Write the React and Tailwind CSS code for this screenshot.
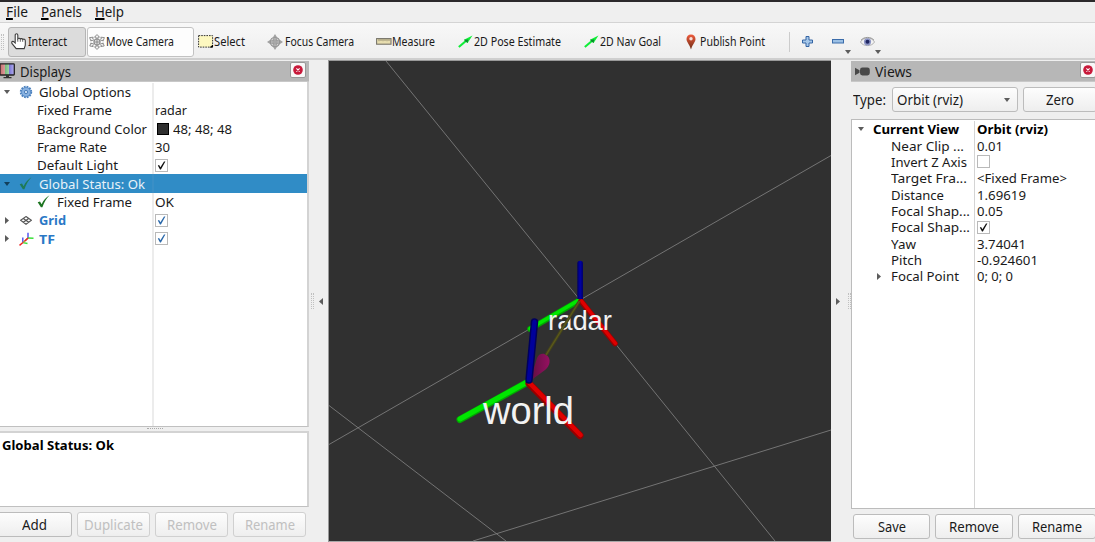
import { useLayoutEffect, useRef } from "react";

/* Text fitted horizontally to a fixed advance width */
function T({ w, className = "", children }) {
  const ref = useRef(null);
  useLayoutEffect(() => {
    const n = ref.current;
    n.style.transform = "none";
    const s = w / n.getBoundingClientRect().width;
    n.style.transform = `scaleX(${s})`;
  }, [w, children]);
  return (
    <span className={"inline-block shrink-0 whitespace-pre " + className} style={{ width: w }}>
      <span ref={ref} className="inline-block origin-left whitespace-pre">{children}</span>
    </span>
  );
}

const Down = ({ className = "", fill = "#5c5c5c" }) => (
  <svg className={"shrink-0 " + className} width="6" height="4" viewBox="0 0 6 4"><path d="M0 0H6L3 4Z" fill={fill} /></svg>
);
const Right = ({ className = "" }) => (
  <svg className={"shrink-0 " + className} width="4" height="7" viewBox="0 0 4 7"><path d="M0 0V7L4 3.5Z" fill="#5c5c5c" /></svg>
);
const Left = ({ className = "" }) => (
  <svg className={"shrink-0 " + className} width="4" height="7" viewBox="0 0 4 7"><path d="M4 0V7L0 3.5Z" fill="#5c5c5c" /></svg>
);

const Hand = () => (
  <svg width="16" height="17" viewBox="0 0 16 17" className="shrink-0">
    <path d="M4.2 10V2C4.200.3 6.800.3 6.800 2V5.800C7.300 5 8.900 5 9.300 6C9.900 5.400 11.200 5.500 11.700 6.400C12.800 5.800 14.300 6.300 14.300 7.800V12.200L13.200 15.600H5.200L.9 10.400C.3 8.600 1.800 7.800 3 8.900Z" fill="#fff" stroke="#3c3c3c" strokeWidth="1.100" />
    <path d="M6.800 6V8.800M9.300 6.300V8.800M11.700 6.700V8.800" stroke="#555" strokeWidth=".9" />
  </svg>
);
const MoveIcon = () => (
  <svg width="16" height="16" viewBox="0 0 16 16" className="shrink-0" fill="#f4f4f4" stroke="#777" strokeWidth=".8">
    <path d="M8 .6L10.5 3H9V5H7V3H5.500ZM8 15.400L10.500 13H9V11H7V13H5.500Z" />
    <path d="M.6 3.600L4.200 3.200L3.600 4.600L5.600 5.800L4.800 7.200L2.800 6L2 7.200ZM15.400 3.600L11.800 3.200L12.400 4.600L10.400 5.800L11.200 7.200L13.200 6L14 7.200ZM.8 12L2 8.800L2.800 10L4.800 8.900L5.600 10.200L3.600 11.400L4.200 12.600ZM15.200 12L14 8.800L13.200 10L11.200 8.900L10.400 10.200L12.400 11.400L11.800 12.600Z" />
    <circle cx="8" cy="8" r="2.900" fill="#e9e9e9" /><path d="M5.500 8H10.500M8 5.500V10.500" />
  </svg>
);
const SelectIcon = () => (
  <svg width="16" height="13" viewBox="0 0 16 13" className="shrink-0">
    <rect x=".6" y=".6" width="14" height="11.500" fill="#fdf8c0" stroke="#333" strokeWidth="1" strokeDasharray="1.600 1" />
    <path d="M15 9.500V12.500H11.500Z" fill="#000" />
  </svg>
);
const FocusIcon = () => (
  <svg width="16" height="16" viewBox="0 0 16 16" className="shrink-0" fill="none" stroke="#8e8e8e">
    <circle cx="8" cy="8" r="4.700" fill="#e2e2e2" strokeWidth="1.200" /><ellipse cx="8" cy="8" rx="2" ry="4.600" strokeWidth=".8" /><ellipse cx="8" cy="8" rx="4.600" ry="2" strokeWidth=".8" />
    <path d="M8 3V13M3 8H13" strokeWidth=".9" /><path d="M8 0L10.200 3.400H5.800ZM8 16L10.200 12.600H5.800ZM0 8L3.400 5.800V10.200ZM16 8L12.600 5.800V10.200Z" fill="#a2a2a2" stroke="none" />
  </svg>
);
const Ruler = () => (
  <svg width="16" height="7" viewBox="0 0 16 7" className="shrink-0">
    <rect x=".6" y=".6" width="14.400" height="5.600" fill="#e8deb0" stroke="#77746a" strokeWidth="1.100" />
    <path d="M3 1V3.200M5 1V3M7 1V3.200M9 1V3M11 1V3.200M13 1V3" stroke="#77705a" strokeWidth=".7" />
  </svg>
);
const Arrow = () => (
  <svg width="15" height="13" viewBox="0 0 15 13" className="shrink-0">
    <path d="M.8 12L8.200 5.800" stroke="#0fee38" strokeWidth="2.100" />
    <path d="M14.500 .5L6 4.800L9.600 8Z" fill="#0fee38" />
    <path d="M6 4.800L10.200 4.600L9.600 8L7.400 6.600Z" fill="#08902a" />
  </svg>
);
const Pin = () => (
  <svg width="10" height="16" viewBox="0 0 10 16" className="shrink-0">
    <defs><linearGradient id="pin" x2="0" y2="1"><stop offset="0" stopColor="#ef5b3d" /><stop offset="1" stopColor="#6b2c14" /></linearGradient></defs>
    <path d="M5 .5C2.300.5.5 2.400.5 5C.5 8.300 3.500 10.200 5 15.500C6.500 10.200 9.500 8.300 9.500 5C9.500 2.400 7.700.5 5 .5Z" fill="url(#pin)" />
    <circle cx="5" cy="4.800" r="1.700" fill="#f6dfda" />
  </svg>
);
const Eye = () => (
  <svg width="15" height="12" viewBox="0 0 15 12" className="shrink-0">
    <path d="M.5 6C3 .8 12 .8 14.500 6C12 10.800 3 10.800 .5 6Z" fill="#f3f3f3" stroke="#aaa" strokeWidth=".9" />
    <circle cx="7.500" cy="5.800" r="3.600" fill="#8c95c5" /><circle cx="7.500" cy="5.800" r="2" fill="#202763" />
    <path d="M1 4.200C4 .5 11 .5 14 4.200" fill="none" stroke="#999" />
  </svg>
);
const Monitor = () => (
  <svg width="15" height="16" viewBox="0 0 15 16" className="shrink-0">
    <defs><linearGradient id="mon"><stop offset="0" stopColor="#c86b6b" /><stop offset=".33" stopColor="#d89a9a" /><stop offset=".34" stopColor="#6fba7a" /><stop offset=".65" stopColor="#a7d4a9" /><stop offset=".66" stopColor="#7c78d8" /><stop offset="1" stopColor="#b5b1ef" /></linearGradient></defs>
    <rect x="0" y=".8" width="14.300" height="11.200" rx=".8" fill="url(#mon)" stroke="#222" strokeWidth="1.300" />
    <path d="M6 12H9V14H6ZM3.500 14H11.500V15.200H3.500Z" fill="#333" />
  </svg>
);
const Gear = () => (
  <svg width="14" height="14" viewBox="0 0 14 14" className="shrink-0">
    <circle cx="7" cy="7" r="5.200" fill="#86afe0" stroke="#4b80bd" strokeWidth="2" strokeDasharray="1.700 1.020" />
    <circle cx="7" cy="7" r="4.400" fill="#8ab3e2" stroke="#5a8cc6" strokeWidth=".7" /><circle cx="7" cy="7" r="1.700" fill="#c6daf0" stroke="#4579b6" strokeWidth=".9" />
  </svg>
);
const GreenCheck = ({ fill = "#1c7420" }) => (
  <svg width="13" height="13" viewBox="0 0 13 13" className="shrink-0"><path d="M.7 7.200L3 6.600L4.600 9.200C6.600 5.200 9 2.300 12.500.3C9.500 3.400 7.100 7.400 5.400 12.300H3.900Z" fill={fill} /></svg>
);
const GridIcon = () => (
  <svg width="12" height="9" viewBox="0 0 12 9" className="shrink-0"><path d="M6 .6L11.400 4.300L6 8.200L.6 4.300ZM3.300 2.500L8.700 6.200M8.700 2.500L3.300 6.200" fill="none" stroke="#555" strokeWidth="1.200" /></svg>
);
const TfIcon = () => (
  <svg width="15" height="14" viewBox="0 0 15 14" className="shrink-0" fill="none" strokeWidth="1.400">
    <path d="M9 6V.8M3.800 10.500V5.500" stroke="#4d4df0" /><path d="M9 6L14.500 6.300M4 10.600L8.500 11.500" stroke="#3ae03a" /><path d="M.5 13.400L4 10.500" stroke="#e22" /><path d="M4 10.500L9 6" stroke="#b88335" /><path d="M9 6L6 9" stroke="#e22" />
  </svg>
);
const CameraIcon = () => (
  <svg width="15" height="9" viewBox="0 0 15 9" className="shrink-0"><path d="M0 .8L4.500 3.300V5.700L0 8.200Z" fill="#484848" /><rect x="5" y=".5" width="9.800" height="8" rx="2.400" fill="#484848" /></svg>
);

const Check = ({ on = true, color = "#111" }) => (
  <span className="flex h-[13px] w-[13px] shrink-0 items-center justify-center border border-[#b9b9b9] bg-white">
    {on && <svg width="9" height="9" viewBox="0 0 9 9"><path d="M.8 4.600L2.100 4L3.400 6.200L7 .5H8.400L3.900 8.600H3Z" fill={color} /></svg>}
  </span>
);

const CloseBtn = () => (
  <span className="flex h-4 w-4 shrink-0 items-center justify-center rounded-xs border border-[#999] bg-[#f8f8f8]">
    <svg width="10" height="10" viewBox="0 0 10 10"><circle cx="5" cy="5" r="4.800" fill="#c8193a" /><path d="M3.400 3.400L6.600 6.600M6.600 3.400L3.400 6.600" stroke="#fff" strokeWidth="1.100" /></svg>
  </span>
);

const Btn = ({ children, tw, className, off }) => (
  <span className={"flex h-[25px] shrink-0 items-center justify-center rounded-[3px] border bg-linear-to-b from-[#fdfdfd] to-[#eeeeee] " + (off ? "border-[#d0d0d0] text-[#c0c0c0] " : "border-[#bcbcbc] text-[#1a1a1a] ") + className}>
    <T w={tw}>{children}</T>
  </span>
);

const Menu = ({ first, rest, w }) => (
  <T w={w}><span className="inline-block h-[16px] border-b-2 border-black leading-[15px]">{first}</span>{rest}</T>
);

function LeftRow({ pad, arrow, icon, name, w, nameClass = "", children, sel }) {
  return (
    <div className={"flex h-[18.300px] shrink-0 " + (sel ? "bg-[#308cc6] text-[#e8f2f8]" : "")}>
      <div className={"flex w-[154px] shrink-0 items-center border-r-2 " + (sel ? "border-[#3a8fc6]" : "border-[#ececec]")}>
        <span className="flex w-[19px] shrink-0 pl-[3.500px]">{arrow}</span>
        <span className={"flex shrink-0 items-center " + pad}>{icon}</span>
        <T w={w} className={nameClass}>{name}</T>
      </div>
      <div className="flex items-center pl-px">{children}</div>
    </div>
  );
}

function RightRow({ name, w, bold, arrow, children }) {
  return (
    <div className={"flex h-[16.350px] shrink-0 " + (bold ? "font-bold text-black" : "")}>
      <div className="flex w-[123px] shrink-0 items-center border-r border-[#d4d4d4]">
        <span className={"flex shrink-0 items-center " + (bold ? "w-[21px] pl-1.5" : "w-[39px] pl-[25px]")}>{arrow}</span>
        <T w={w}>{name}</T>
      </div>
      <div className="flex items-center pl-[2px]">{children}</div>
    </div>
  );
}

const Tool = ({ className = "", icon, label, w }) => (
  <div className={"flex h-[30px] shrink-0 items-center " + className}>{icon}<T w={w}>{label}</T></div>
);

const Scene = () => (
  <svg width="502" height="481" viewBox="329 61 502 481" className="block">
    <defs>
      <linearGradient id="b1"><stop offset="0" stopColor="#000060" /><stop offset=".5" stopColor="#0000a8" /><stop offset="1" stopColor="#000068" /></linearGradient>
      <linearGradient id="m1"><stop offset="0" stopColor="#5e1040" /><stop offset="1" stopColor="#951060" /></linearGradient>
    </defs>
    <rect x="329" y="61" width="502" height="480" fill="#303030" />
    <rect x="329" y="541" width="502" height="1" fill="#a8a8a8" />
    <g stroke="#858585" strokeWidth=".8" fill="none">
      <path d="M386 61L580 300L775 541" /><path d="M329 444.500L580 300L831 155.500" /><path d="M329 405.500L506 541" /><path d="M473 541L831 430" />
    </g>
    <g strokeLinecap="round">
      <path d="M580 300L530 329" stroke="#00a800" strokeWidth="5.500" /><path d="M580 299.500L530 328.500" stroke="#00e800" strokeWidth="3.500" />
      <path d="M581 301L615 343.500" stroke="#9b0000" strokeWidth="5.500" /><path d="M581.500 301L615.500 343.500" stroke="#df0000" strokeWidth="3.500" />
    </g>
    <path d="M577.300 263C577.300 260 583 260 583 263V299H577.300Z" fill="url(#b1)" />
    <path d="M530 381L537 358C539 352 548 352 549.500 360C550 364 548 367.500 545 370Z" fill="url(#m1)" />
    <g strokeLinecap="round">
      <path d="M528 382L460 419.500" stroke="#00a800" strokeWidth="7" /><path d="M528 381.500L460 419" stroke="#00e600" strokeWidth="5" />
      <path d="M529 383.500L580 435.500" stroke="#950000" strokeWidth="7" /><path d="M529.500 383L580.500 435" stroke="#df0000" strokeWidth="4.500" />
      <path d="M534.500 322L529 380" stroke="#00005c" strokeWidth="7.500" /><path d="M534.500 322L529 380" stroke="#00009b" strokeWidth="4.500" />
    </g>
    <g fill="#f2f2f2" fontFamily="'Liberation Sans', sans-serif">
      <text x="548" y="329.500" fontSize="27" textLength="64" lengthAdjust="spacingAndGlyphs">radar</text>
      <text x="483" y="423.500" fontSize="39" textLength="91" lengthAdjust="spacingAndGlyphs">world</text>
    </g>
    <path d="M579.500 301L546 355" stroke="#45441a" strokeWidth="3" /><path d="M579.500 301L546 355" stroke="#5c5a1c" strokeWidth="1.200" />
  </svg>
);

const Dots = ({ className = "" }) => <span className={"block w-[3px] border-x border-dotted border-[#c0c0c0] " + className} />;

export default function App() {
  return (
    <div className="flex h-[542px] w-[1095px] flex-col overflow-hidden bg-[#efefef] font-['Noto_Sans',sans-serif] text-[13px] leading-[18px] text-[#1a1a1a]">
      <div className="h-0.5 shrink-0 bg-[#2b292b]" />
      <div className="flex h-[21px] shrink-0 items-center gap-[13px] border-b border-[#d4d4d4] pl-1.5 text-[14px]">
        <Menu first="F" rest="ile" w={22} /><Menu first="P" rest="anels" w={41} /><Menu first="H" rest="elp" w={29} />
      </div>
      <div className="flex h-[37px] shrink-0 items-center border-b-2 border-[#cfcfcf] bg-linear-to-b from-[#f8f8f8] to-[#eeeeee] pt-0.5 text-[12px]">
        <Dots className="ml-px mr-1 h-4" />
        <Tool className="w-[78px] gap-px rounded-[3px] border border-[#b5b5b5] bg-[#dcdcdc] pl-[2px]" icon={<Hand />} label="Interact" w={39} />
        <Tool className="ml-px w-[107px] gap-px rounded-[3px] border border-[#c2c2c2] bg-[#fdfdfd] pl-px" icon={<MoveIcon />} label="Move Camera" w={68} />
        <Tool className="w-[73px] pl-[3.500px]" icon={<SelectIcon />} label="Select" w={31} />
        <Tool className="w-[109px] gap-0.5" icon={<FocusIcon />} label="Focus Camera" w={69} />
        <Tool className="w-[82px]" icon={<Ruler />} label="Measure" w={43} />
        <Tool className="w-[126px] gap-px" icon={<Arrow />} label="2D Pose Estimate" w={87} />
        <Tool className="w-[102px] gap-px" icon={<Arrow />} label="2D Nav Goal" w={61} />
        <Tool className="w-[103px] gap-1" icon={<Pin />} label="Publish Point" w={65} />
        <span className="h-5 w-px shrink-0 bg-[#cccccc]" />
        <svg className="ml-3 shrink-0" width="11" height="11" viewBox="0 0 11 11"><path d="M4 .5H7V4H10.500V7H7V10.500H4V7H.5V4H4Z" fill="#a5c7e9" stroke="#3465a4" /></svg>
        <svg className="ml-[19px] shrink-0" width="12" height="5" viewBox="0 0 12 5"><rect x=".5" y=".5" width="11" height="3.500" fill="#9bc0e5" stroke="#3b6caa" /></svg>
        <Down className="ml-px mt-5" />
        <span className="ml-[9px] flex"><Eye /></span>
        <Down className="mt-5" />
      </div>

      <div className="flex min-h-0 grow">
        <div className="flex w-[309px] shrink-0 flex-col">
          <div className="mt-px flex h-[21px] shrink-0 items-center border-b border-[#c8c8c8] bg-[#b7b7b7] text-[14px]">
            <Monitor /><T w={51} className="ml-[5px] mt-px">Displays</T><span className="grow" /><span className="mb-[3px] mr-[3px]"><CloseBtn /></span>
          </div>
          <div className="flex h-[345px] shrink-0 flex-col border-b border-r-2 border-b-[#c0c0c0] border-r-[#d3d3d3] bg-white pt-px">
            <LeftRow arrow={<Down />} pad="w-5" icon={<Gear />} name="Global Options" w={92} />
            <LeftRow pad="w-[18px]" name="Fixed Frame" w={75}><T w={32}>radar</T></LeftRow>
            <LeftRow pad="w-[18px]" name="Background Color" w={110}><span className="ml-0.5 mr-1 h-3 w-3 border border-black bg-[#303030]" /><T w={59}>48; 48; 48</T></LeftRow>
            <LeftRow pad="w-[18px]" name="Frame Rate" w={70}><T w={15}>30</T></LeftRow>
            <LeftRow pad="w-[18px]" name="Default Light" w={81}><Check /></LeftRow>
            <LeftRow sel arrow={<Down fill="#12405c" />} pad="w-5" icon={<GreenCheck fill="#1f7a55" />} name="Global Status: Ok" w={106} />
            <LeftRow pad="w-[38px] pl-[18px]" icon={<GreenCheck />} name="Fixed Frame" w={75}><T w={19}>OK</T></LeftRow>
            <LeftRow arrow={<Right className="ml-px" />} pad="w-5 pl-px" icon={<GridIcon />} name="Grid" w={27} nameClass="font-bold text-[#2a78c6]"><Check color="#2a68aa" /></LeftRow>
            <LeftRow arrow={<Right className="ml-px" />} pad="w-5" icon={<TfIcon />} name="TF" w={16} nameClass="font-bold text-[#2a78c6]"><Check color="#2a68aa" /></LeftRow>
            <div className="w-[154px] grow border-r-2 border-[#ececec]" />
          </div>
          <div className="flex h-1 shrink-0 justify-center"><span className="mt-px w-4 border-t border-dotted border-[#aaa]" /></div>
          <div className="h-[76px] shrink-0 border-b border-r-2 border-t-2 border-b-[#c0c0c0] border-r-[#d3d3d3] border-t-[#d3d3d3] bg-white pl-[1.500px] pt-[3px] font-bold text-black"><T w={112}>Global Status: Ok</T></div>
          <div className="flex gap-[5px] pt-[5px] text-[13.500px]">
            <Btn tw={25} className="-ml-[3px] w-[75px]">Add</Btn><Btn off tw={59} className="w-[73px]">Duplicate</Btn><Btn off tw={50} className="w-[73px]">Remove</Btn><Btn off tw={50} className="w-[73px]">Rename</Btn>
          </div>
        </div>
        <div className="flex w-[19px] shrink-0 items-center"><Dots className="ml-0.5 h-4" /><Left className="ml-[5px]" /></div>
        <div className="w-[503px] shrink-0 border-l border-t border-[#999]"><Scene /></div>
        <div className="flex w-5 shrink-0 items-center pl-[5px]"><Right /><Dots className="ml-2 h-4" /></div>
        <div className="flex w-[244px] shrink-0 flex-col">
          <div className="mt-px flex h-[21px] shrink-0 items-center border-b border-[#c8c8c8] bg-[#b7b7b7] pl-1 text-[14px]">
            <CameraIcon /><T w={37} className="ml-[5px] mt-px">Views</T><span className="grow" /><span className="mb-[3px] -mr-px"><CloseBtn /></span>
          </div>
          <div className="flex items-center pt-[5px] text-[13.500px]">
            <T w={33} className="ml-[1.500px] mr-[6px]">Type:</T>
            <span className="flex h-[25px] w-[126px] shrink-0 items-center rounded-[3px] border border-[#bcbcbc] bg-linear-to-b from-[#fdfdfd] to-[#eeeeee] pl-1"><T w={66}>Orbit (rviz)</T><Down className="ml-[41px]" /></span>
            <Btn tw={28} className="ml-[5px] w-[74px]">Zero</Btn>
          </div>
          <div className="mt-[7px] flex h-[390px] shrink-0 flex-col border border-r-0 border-[#bcbcbc] bg-white pt-px">
            <RightRow bold arrow={<Down />} name="Current View" w={86}><T w={71}>Orbit (rviz)</T></RightRow>
            <RightRow name="Near Clip ..." w={73}><T w={26}>0.01</T></RightRow>
            <RightRow name="Invert Z Axis" w={76}><Check on={false} /></RightRow>
            <RightRow name="Target Fra..." w={76}><T w={90}>{"<Fixed Frame>"}</T></RightRow>
            <RightRow name="Distance" w={53}><T w={49}>1.69619</T></RightRow>
            <RightRow name="Focal Shap..." w={79}><T w={26}>0.05</T></RightRow>
            <RightRow name="Focal Shap..." w={79}><Check /></RightRow>
            <RightRow name="Yaw" w={25}><T w={49}>3.74041</T></RightRow>
            <RightRow name="Pitch" w={31}><T w={61}>-0.924601</T></RightRow>
            <RightRow arrow={<Right />} name="Focal Point" w={68}><T w={36}>0; 0; 0</T></RightRow>
            <div className="w-[123px] grow border-r border-[#d4d4d4]" />
          </div>
          <div className="flex gap-[5px] pl-0.5 pt-[5px] text-[13.500px]">
            <Btn tw={28} className="w-[77px]">Save</Btn><Btn tw={50} className="w-[78px]">Remove</Btn><Btn tw={50} className="w-[78px]">Rename</Btn>
          </div>
        </div>
      </div>
    </div>
  );
}
